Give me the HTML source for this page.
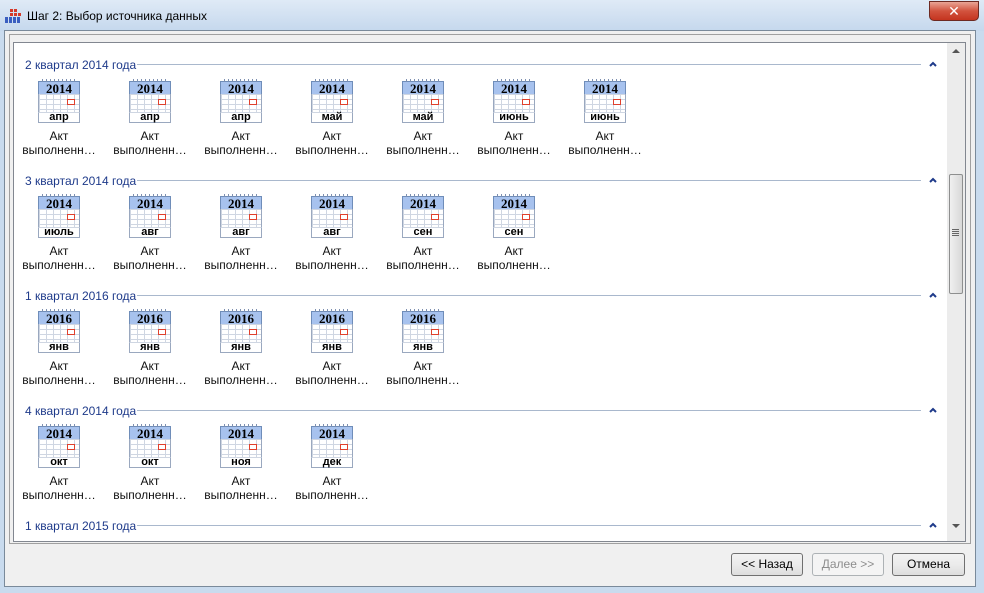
<!DOCTYPE html>
<html><head><meta charset="utf-8"><style>
*{margin:0;padding:0;box-sizing:border-box}
body{width:984px;height:593px;overflow:hidden;background:#c9dbee;font-family:"Liberation Sans","DejaVu Sans",sans-serif;position:relative}
.titlebar{position:absolute;left:0;top:0;width:984px;height:31px;background:linear-gradient(#dfeaf6,#c5d8ed)}
.title{position:absolute;left:27px;top:9px;font-size:12px;color:#000}
.close{position:absolute;left:929px;top:1px;width:50px;height:20px;border:1px solid #6d2a22;border-radius:0 0 5px 5px;background:linear-gradient(#e9a595,#d2533e 50%,#c4341f);color:#fff;font-size:14px;font-weight:bold;text-align:center;line-height:18px}
.client{position:absolute;left:4px;top:30px;width:972px;height:557px;background:#f0f0f0;border:1px solid #7a8a9a}
.panel{position:absolute;left:13px;top:42px;width:953px;height:500px;background:#fff;border:1px solid #828790}
.outerp{position:absolute;left:9px;top:34px;width:962px;height:510px;border:1px solid #a0a0a0}
.sb{position:absolute;left:947px;top:43px;width:18px;height:498px;background:#ececec}
.thumb{position:absolute;left:949px;top:174px;width:14px;height:120px;border:1px solid #8e8f8f;border-radius:2px;background:linear-gradient(90deg,#f0f0f0,#d8d8d8)}
.hdr{position:absolute;left:25px;font-size:12px;color:#1e3a8a}
.line{position:absolute;left:137px;width:784px;height:1px;background:#a9b8cd}
.car{position:absolute;left:929px;width:8px;height:8px}
.ic{position:absolute;width:42px;height:44px}
.ic .sp{position:absolute;left:4px;top:0;width:34px;height:3px;background:repeating-linear-gradient(90deg,#7d8fb0 0 1px,transparent 1px 4px)}
.ic .hd{position:absolute;left:0;top:2px;width:42px;height:14px;background:#a7c2ee;border:1px solid #6f8db9;font-family:"Liberation Serif",serif;font-weight:bold;font-size:13px;text-align:center;line-height:13px;color:#000}
.ic .gr{position:absolute;left:0;top:15px;width:42px;height:19px;border-left:1px solid #9aa8bf;border-right:1px solid #9aa8bf;background-color:#fff;background-image:linear-gradient(90deg,#cfd6e2 1px,transparent 1px),linear-gradient(#cfd6e2 1px,transparent 1px);background-size:7px 100%,100% 5px}
.ic .rd{position:absolute;left:29px;top:20px;width:8px;height:6px;border:1px solid #e0402c;background:#fff}
.ic .ft{position:absolute;left:0;top:33px;width:42px;height:11px;border:1px solid #9aa8bf;border-top:1px solid #cfd6e2;background:#fff;font-weight:bold;font-size:11px;text-align:center;line-height:9px;color:#000}
.lb{position:absolute;width:90px;font-size:12px;text-align:center;line-height:14px;color:#111}
.btn{position:absolute;top:553px;height:23px;border:1px solid #707070;border-radius:3px;background:linear-gradient(#f2f2f2,#ebebeb 50%,#dddddd);font-size:12px;text-align:center;line-height:21px;color:#000}
.dis{border-color:#adb2b5;color:#8d8d8d;background:#f4f4f4}
</style></head><body>
<div class="titlebar"></div>
<svg style="position:absolute;left:5px;top:9px" width="16" height="14"><g fill="#d63a2a"><rect x="5" y="0" width="3" height="3"/><rect x="9" y="0" width="3" height="3"/><rect x="5" y="4" width="3" height="3"/><rect x="9" y="4" width="3" height="3"/><rect x="13" y="4" width="3" height="3"/></g><g fill="#3a5ec0"><rect x="0" y="8" width="3" height="3"/><rect x="4" y="8" width="3" height="3"/><rect x="8" y="8" width="3" height="3"/><rect x="12" y="8" width="3" height="3"/><rect x="0" y="11" width="3" height="3"/><rect x="4" y="11" width="3" height="3"/><rect x="8" y="11" width="3" height="3"/><rect x="12" y="11" width="3" height="3"/></g></svg>
<div class="title">Шаг 2: Выбор источника данных</div>
<div class="close">✕</div>
<div class="client"></div>
<div class="outerp"></div>
<div class="panel"></div>
<div class="sb"></div>
<div style="position:absolute;left:952px;top:49px;width:0;height:0;border-left:4px solid transparent;border-right:4px solid transparent;border-bottom:4px solid #555"></div>
<div style="position:absolute;left:952px;top:524px;width:0;height:0;border-left:4px solid transparent;border-right:4px solid transparent;border-top:4px solid #555"></div>
<div class="thumb"></div>
<div style="position:absolute;left:952px;top:229px;width:7px;height:7px;background:repeating-linear-gradient(#666 0 1px,transparent 1px 2px)"></div>

<div class="hdr" style="top:58px">2 квартал 2014 года</div><div class="line" style="top:64px"></div>
<svg class="car" style="top:60px" viewBox="0 0 8 8"><path d="M1 6 L4 3 L7 6" stroke="#1e3a8a" stroke-width="2" fill="none"/></svg>
<div class="hdr" style="top:174px">3 квартал 2014 года</div><div class="line" style="top:180px"></div>
<svg class="car" style="top:176px" viewBox="0 0 8 8"><path d="M1 6 L4 3 L7 6" stroke="#1e3a8a" stroke-width="2" fill="none"/></svg>
<div class="hdr" style="top:289px">1 квартал 2016 года</div><div class="line" style="top:295px"></div>
<svg class="car" style="top:291px" viewBox="0 0 8 8"><path d="M1 6 L4 3 L7 6" stroke="#1e3a8a" stroke-width="2" fill="none"/></svg>
<div class="hdr" style="top:404px">4 квартал 2014 года</div><div class="line" style="top:410px"></div>
<svg class="car" style="top:406px" viewBox="0 0 8 8"><path d="M1 6 L4 3 L7 6" stroke="#1e3a8a" stroke-width="2" fill="none"/></svg>
<div class="hdr" style="top:519px">1 квартал 2015 года</div><div class="line" style="top:525px"></div>
<svg class="car" style="top:521px" viewBox="0 0 8 8"><path d="M1 6 L4 3 L7 6" stroke="#1e3a8a" stroke-width="2" fill="none"/></svg>

<div class="ic" style="left:38px;top:79px"><div class="hd">2014</div><div class="sp"></div><div class="gr"></div><div class="rd"></div><div class="ft">апр</div></div>
<div class="ic" style="left:129px;top:79px"><div class="hd">2014</div><div class="sp"></div><div class="gr"></div><div class="rd"></div><div class="ft">апр</div></div>
<div class="ic" style="left:220px;top:79px"><div class="hd">2014</div><div class="sp"></div><div class="gr"></div><div class="rd"></div><div class="ft">апр</div></div>
<div class="ic" style="left:311px;top:79px"><div class="hd">2014</div><div class="sp"></div><div class="gr"></div><div class="rd"></div><div class="ft">май</div></div>
<div class="ic" style="left:402px;top:79px"><div class="hd">2014</div><div class="sp"></div><div class="gr"></div><div class="rd"></div><div class="ft">май</div></div>
<div class="ic" style="left:493px;top:79px"><div class="hd">2014</div><div class="sp"></div><div class="gr"></div><div class="rd"></div><div class="ft">июнь</div></div>
<div class="ic" style="left:584px;top:79px"><div class="hd">2014</div><div class="sp"></div><div class="gr"></div><div class="rd"></div><div class="ft">июнь</div></div>
<div class="lb" style="left:14px;top:129px">Акт<br>выполненн…</div>
<div class="lb" style="left:105px;top:129px">Акт<br>выполненн…</div>
<div class="lb" style="left:196px;top:129px">Акт<br>выполненн…</div>
<div class="lb" style="left:287px;top:129px">Акт<br>выполненн…</div>
<div class="lb" style="left:378px;top:129px">Акт<br>выполненн…</div>
<div class="lb" style="left:469px;top:129px">Акт<br>выполненн…</div>
<div class="lb" style="left:560px;top:129px">Акт<br>выполненн…</div>

<div class="ic" style="left:38px;top:194px"><div class="hd">2014</div><div class="sp"></div><div class="gr"></div><div class="rd"></div><div class="ft">июль</div></div>
<div class="ic" style="left:129px;top:194px"><div class="hd">2014</div><div class="sp"></div><div class="gr"></div><div class="rd"></div><div class="ft">авг</div></div>
<div class="ic" style="left:220px;top:194px"><div class="hd">2014</div><div class="sp"></div><div class="gr"></div><div class="rd"></div><div class="ft">авг</div></div>
<div class="ic" style="left:311px;top:194px"><div class="hd">2014</div><div class="sp"></div><div class="gr"></div><div class="rd"></div><div class="ft">авг</div></div>
<div class="ic" style="left:402px;top:194px"><div class="hd">2014</div><div class="sp"></div><div class="gr"></div><div class="rd"></div><div class="ft">сен</div></div>
<div class="ic" style="left:493px;top:194px"><div class="hd">2014</div><div class="sp"></div><div class="gr"></div><div class="rd"></div><div class="ft">сен</div></div>
<div class="lb" style="left:14px;top:244px">Акт<br>выполненн…</div>
<div class="lb" style="left:105px;top:244px">Акт<br>выполненн…</div>
<div class="lb" style="left:196px;top:244px">Акт<br>выполненн…</div>
<div class="lb" style="left:287px;top:244px">Акт<br>выполненн…</div>
<div class="lb" style="left:378px;top:244px">Акт<br>выполненн…</div>
<div class="lb" style="left:469px;top:244px">Акт<br>выполненн…</div>

<div class="ic" style="left:38px;top:309px"><div class="hd">2016</div><div class="sp"></div><div class="gr"></div><div class="rd"></div><div class="ft">янв</div></div>
<div class="ic" style="left:129px;top:309px"><div class="hd">2016</div><div class="sp"></div><div class="gr"></div><div class="rd"></div><div class="ft">янв</div></div>
<div class="ic" style="left:220px;top:309px"><div class="hd">2016</div><div class="sp"></div><div class="gr"></div><div class="rd"></div><div class="ft">янв</div></div>
<div class="ic" style="left:311px;top:309px"><div class="hd">2016</div><div class="sp"></div><div class="gr"></div><div class="rd"></div><div class="ft">янв</div></div>
<div class="ic" style="left:402px;top:309px"><div class="hd">2016</div><div class="sp"></div><div class="gr"></div><div class="rd"></div><div class="ft">янв</div></div>
<div class="lb" style="left:14px;top:359px">Акт<br>выполненн…</div>
<div class="lb" style="left:105px;top:359px">Акт<br>выполненн…</div>
<div class="lb" style="left:196px;top:359px">Акт<br>выполненн…</div>
<div class="lb" style="left:287px;top:359px">Акт<br>выполненн…</div>
<div class="lb" style="left:378px;top:359px">Акт<br>выполненн…</div>

<div class="ic" style="left:38px;top:424px"><div class="hd">2014</div><div class="sp"></div><div class="gr"></div><div class="rd"></div><div class="ft">окт</div></div>
<div class="ic" style="left:129px;top:424px"><div class="hd">2014</div><div class="sp"></div><div class="gr"></div><div class="rd"></div><div class="ft">окт</div></div>
<div class="ic" style="left:220px;top:424px"><div class="hd">2014</div><div class="sp"></div><div class="gr"></div><div class="rd"></div><div class="ft">ноя</div></div>
<div class="ic" style="left:311px;top:424px"><div class="hd">2014</div><div class="sp"></div><div class="gr"></div><div class="rd"></div><div class="ft">дек</div></div>
<div class="lb" style="left:14px;top:474px">Акт<br>выполненн…</div>
<div class="lb" style="left:105px;top:474px">Акт<br>выполненн…</div>
<div class="lb" style="left:196px;top:474px">Акт<br>выполненн…</div>
<div class="lb" style="left:287px;top:474px">Акт<br>выполненн…</div>

<div class="btn" style="left:731px;width:72px">&lt;&lt; Назад</div>
<div class="btn dis" style="left:812px;width:72px">Далее &gt;&gt;</div>
<div class="btn" style="left:892px;width:73px">Отмена</div>
</body></html>
